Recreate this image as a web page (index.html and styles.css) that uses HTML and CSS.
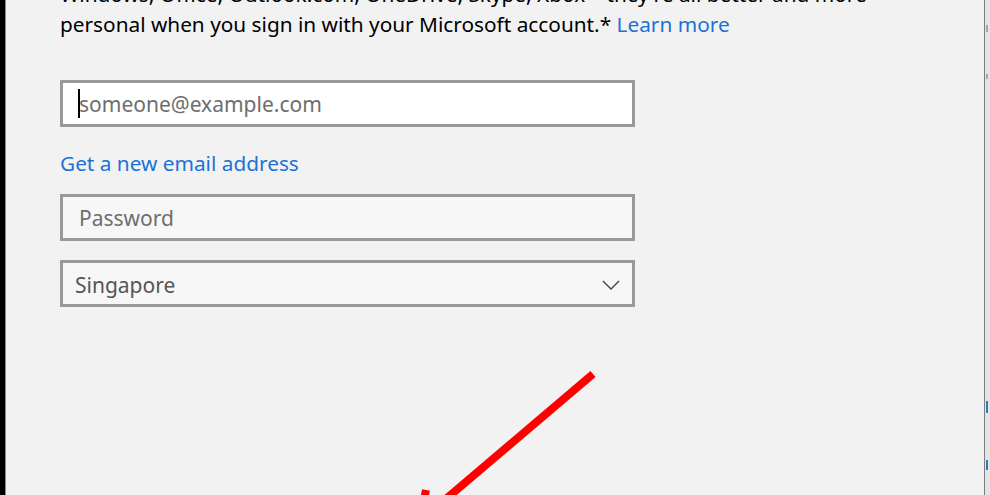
FILE: index.html
```html
<!DOCTYPE html>
<html lang="en">
<head>
<meta charset="utf-8">
<title>Sign in</title>
<link rel="stylesheet" href="styles.css">
</head>
<body>
<div class="frame">
  <div class="edge-left"></div>
  <main class="panel">
    <div class="content">
      <p class="intro">Windows, Office, Outlook.com, OneDrive, Skype, Xbox – they're all better and more<br>personal when you sign in with your Microsoft account.* <a class="link" href="#">Learn more</a></p>
      <div class="field field-white"><span class="caret"></span><span class="ph">someone@example.com</span></div>
      <a class="link newmail" href="#">Get a new email address</a>
      <div class="field"><span class="ph">Password</span></div>
      <div class="field select"><span class="ph sel">Singapore</span>
        <svg class="chev" width="18" height="10" viewBox="0 0 18 10"><path d="M1 1 L9 9 L17 1" fill="none" stroke="#444" stroke-width="1.4"/></svg>
      </div>
    </div>
    <svg class="arrow" width="990" height="495" viewBox="0 0 990 495">
      <line x1="593" y1="374" x2="440" y2="504" stroke="#ff0000" stroke-width="8"/>
      <line x1="426" y1="490" x2="424" y2="500" stroke="#ff0000" stroke-width="8"/>
    </svg>
  </main>
  <div class="edge-right">
    <span class="ghost g1"></span>
    <span class="ghost g2"></span>
    <span class="ghost g3"></span>
    <span class="ghost g4"></span>
  </div>
</div>
</body>
</html>
```
FILE: styles.css
```css
html, body {
  margin: 0;
  padding: 0;
  width: 990px;
  height: 495px;
  overflow: hidden;
  background: #f2f2f2;
}
.frame {
  display: flex;
  width: 990px;
  height: 495px;
  font-family: "Noto Sans", "Open Sans", sans-serif;
}
.edge-left {
  width: 5px;
  background: #000;
  border-right: 1px solid #8a8a8a;
  flex: none;
}
.panel {
  flex: 1;
  background: #f2f2f2;
  overflow: hidden;
}
.content {
  margin-top: -21px;
  padding-left: 54px;
  display: flex;
  flex-direction: column;
  align-items: flex-start;
}
.intro {
  margin: 0;
  white-space: nowrap;
  font-size: 20.8px;
  line-height: 30px;
  color: #000;
}
.link {
  color: #1a73d6;
  text-decoration: none;
}
.field {
  box-sizing: border-box;
  width: 575px;
  height: 47px;
  border: 3px solid #999;
  background: #f7f7f7;
  display: flex;
  align-items: center;
  padding-left: 16px;
  position: relative;
}
.field-white {
  background: #fff;
  margin-top: 41px;
}
.ph {
  font-size: 21px;
  color: #6e6e6e;
}
.caret {
  position: absolute;
  left: 15px;
  top: 6px;
  width: 2px;
  height: 29px;
  background: #000;
}
.newmail {
  font-size: 20.8px;
  line-height: 26px;
  margin-top: 23px;
  margin-bottom: 18px;
}
.select {
  margin-top: 19px;
  padding-left: 12px;
  justify-content: space-between;
  padding-right: 12px;
}
.ph.sel {
  color: #555;
  margin-top: 3px;
}
.chev {
  margin-top: 2px;
}
.arrow {
  position: absolute;
  left: 0;
  top: 0;
  pointer-events: none;
}
.edge-right {
  width: 5px;
  flex: none;
  border-left: 1px solid #7d7d7d;
  background: #e4e4e4;
  position: relative;
  overflow: hidden;
}
.ghost {
  position: absolute;
  left: 1px;
  width: 2px;
  background: #a8a8a8;
}
.g1 { top: 25px; height: 7px; }
.g2 { top: 74px; height: 5px; }
.g3 { top: 401px; height: 12px; background: #2a7fb0; }
.g4 { top: 460px; height: 10px; background: #2a7fb0; }
```
